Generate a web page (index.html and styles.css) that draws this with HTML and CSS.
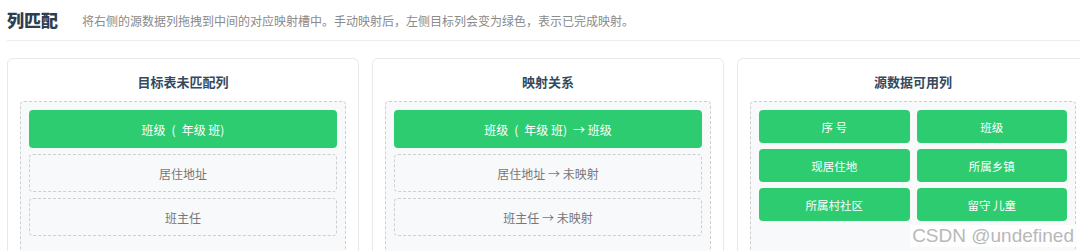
FILE: index.html
```html
<!DOCTYPE html>
<html lang="zh-CN">
<head>
    <meta charset="UTF-8">
    <meta name="viewport" content="width=device-width, initial-scale=1.0">
    <title>列匹配</title>
    <link rel="stylesheet" href="styles.css">
</head>
<body>

    <div class="page">
        <div class="header">
            <h2>列匹配</h2>
            <p class="hint">将右侧的源数据列拖拽到中间的对应映射槽中。手动映射后，左侧目标列会变为绿色，表示已完成映射。</p>
        </div>

        <div class="columns">
            <div class="card">
                <h3>目标表未匹配列</h3>
                <div class="zone list">
                    <div class="item done">班级&ensp;(&ensp;年级 班)</div>
                    <div class="item empty">居住地址</div>
                    <div class="item empty">班主任</div>
                </div>
            </div>

            <div class="card">
                <h3>映射关系</h3>
                <div class="zone list">
                    <div class="item done">班级&ensp;(&ensp;年级 班)&ensp;→ 班级</div>
                    <div class="item empty">居住地址 → 未映射</div>
                    <div class="item empty">班主任 → 未映射</div>
                </div>
            </div>

            <div class="card">
                <h3>源数据可用列</h3>
                <div class="zone grid">
                    <div class="chip">序 号</div>
                    <div class="chip">班级</div>
                    <div class="chip">现居住地</div>
                    <div class="chip">所属乡镇</div>
                    <div class="chip">所属村社区</div>
                    <div class="chip">留守 儿童</div>
                </div>
            </div>
        </div>
    </div>

    <div class="watermark">CSDN @undefined</div>

</body>
</html>
```

FILE: styles.css
```css
/* Basic styles */
html, body {
    height: 251px;
    overflow: hidden;
}

body {
    font-family: "Noto Sans CJK SC", "Noto Sans", sans-serif;
    background-color: white;
    margin: 0;
    padding: 0;
}

.page {
    padding: 0 0 0 7px;
}

.header {
    display: flex;
    align-items: center;
    gap: 24px;
    padding: 8px 0;
    border-bottom: 1px solid #ececec;
}

.header h2 {
    margin: 0;
    font-size: 17px;
    line-height: 24px;
    font-weight: 900;
    color: #2c3e50;
}

.hint {
    margin: 0;
    font-size: 12px;
    color: #8a8a8a;
}

.columns {
    display: grid;
    grid-template-columns: 352px 352px 352px;
    gap: 13px;
    margin-top: 17px;
}

.card {
    border: 1px solid #e9e9e9;
    border-radius: 6px;
    padding: 12px;
    height: 180px;
}

.card h3 {
    margin: 0 0 8px;
    font-size: 13px;
    line-height: 22px;
    text-align: center;
    color: #34495e;
}

.zone {
    border: 1px dashed #cfcfcf;
    border-radius: 4px;
    background-color: #f8f9fa;
    padding: 8px;
    height: 150px;
}

.list {
    display: flex;
    flex-direction: column;
    gap: 6px;
}

.item {
    height: 38px;
    flex-shrink: 0;
    display: flex;
    align-items: center;
    justify-content: center;
    font-size: 12px;
    border-radius: 4px;
    box-sizing: border-box;
    white-space: pre;
}

.done {
    background-color: #2ecc71;
    color: white;
}

.empty {
    border: 1px dashed #cfcfcf;
    color: #777;
}

.grid {
    display: grid;
    grid-template-columns: 1fr 1fr;
    grid-auto-rows: 33px;
    gap: 6px 7px;
}

.chip {
    display: flex;
    align-items: center;
    justify-content: center;
    background-color: #2ecc71;
    color: white;
    font-size: 11.5px;
    border-radius: 4px;
}

.watermark {
    position: absolute;
    right: 4px;
    bottom: 4px;
    font-family: "Liberation Sans", Arial, sans-serif;
    font-size: 19px;
    color: #b8b8b8;
    background-color: rgba(255, 255, 255, 0.85);
    padding: 0 2px;
}
```
